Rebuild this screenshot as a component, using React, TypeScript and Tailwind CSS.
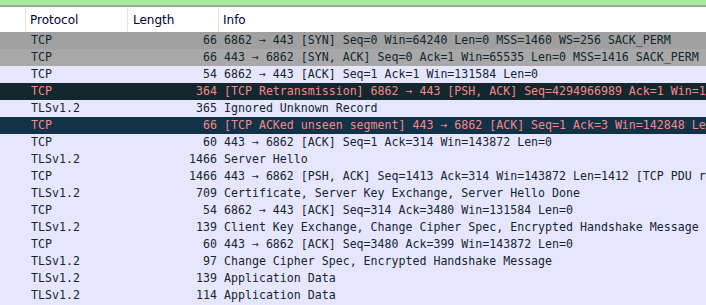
type Row = { proto: string; len: number; info: string; tone: 'syn' | 'syn2' | 'plain' | 'bad' | 'bad2' }

const rows: Row[] = [
  { proto: 'TCP', len: 66, info: '6862 → 443 [SYN] Seq=0 Win=64240 Len=0 MSS=1460 WS=256 SACK_PERM', tone: 'syn' },
  { proto: 'TCP', len: 66, info: '443 → 6862 [SYN, ACK] Seq=0 Ack=1 Win=65535 Len=0 MSS=1416 SACK_PERM', tone: 'syn2' },
  { proto: 'TCP', len: 54, info: '6862 → 443 [ACK] Seq=1 Ack=1 Win=131584 Len=0', tone: 'plain' },
  { proto: 'TCP', len: 364, info: '[TCP Retransmission] 6862 → 443 [PSH, ACK] Seq=4294966989 Ack=1 Win=131584 Len=310', tone: 'bad' },
  { proto: 'TLSv1.2', len: 365, info: 'Ignored Unknown Record', tone: 'plain' },
  { proto: 'TCP', len: 66, info: '[TCP ACKed unseen segment] 443 → 6862 [ACK] Seq=1 Ack=3 Win=142848 Len=0', tone: 'bad2' },
  { proto: 'TCP', len: 60, info: '443 → 6862 [ACK] Seq=1 Ack=314 Win=143872 Len=0', tone: 'plain' },
  { proto: 'TLSv1.2', len: 1466, info: 'Server Hello', tone: 'plain' },
  { proto: 'TCP', len: 1466, info: '443 → 6862 [PSH, ACK] Seq=1413 Ack=314 Win=143872 Len=1412 [TCP PDU reassembled in 14]', tone: 'plain' },
  { proto: 'TLSv1.2', len: 709, info: 'Certificate, Server Key Exchange, Server Hello Done', tone: 'plain' },
  { proto: 'TCP', len: 54, info: '6862 → 443 [ACK] Seq=314 Ack=3480 Win=131584 Len=0', tone: 'plain' },
  { proto: 'TLSv1.2', len: 139, info: 'Client Key Exchange, Change Cipher Spec, Encrypted Handshake Message', tone: 'plain' },
  { proto: 'TCP', len: 60, info: '443 → 6862 [ACK] Seq=3480 Ack=399 Win=143872 Len=0', tone: 'plain' },
  { proto: 'TLSv1.2', len: 97, info: 'Change Cipher Spec, Encrypted Handshake Message', tone: 'plain' },
  { proto: 'TLSv1.2', len: 139, info: 'Application Data', tone: 'plain' },
  { proto: 'TLSv1.2', len: 114, info: 'Application Data', tone: 'plain' },
]

const toneClass = {
  syn: 'bg-[#a0a0a0] text-[#12272e]',
  syn2: 'bg-[#a8a8a8] text-[#12272e]',
  plain: 'bg-[#e7e6ff] text-[#12272e]',
  bad: 'bg-[#12272e] text-[#f78787]',
  bad2: 'bg-[#113247] text-[#f78787]',
}

export default function App() {
  return (
    <div className="w-[706px] h-[305px] overflow-hidden bg-[#e7e6ff]">
      <div className="h-[5px] bg-[#a6eb9e]" />
      <div className="h-[2px] bg-[#a0a0a0]" />
      <div className="h-[25px] bg-white flex text-[12px] text-[#000040] font-['DejaVu_Sans',sans-serif] border-t border-white">
        <div className="w-[26px] border-r border-[#e5e5e5]" />
        <div className="w-[102px] pl-[4px] flex items-center border-r border-[#e5e5e5]">Protocol</div>
        <div className="w-[91px] pl-[5px] flex items-center border-r border-[#e5e5e5]">Length</div>
        <div className="flex-1 pl-[4px] flex items-center">Info</div>
      </div>
      <div className="font-['DejaVu_Sans_Mono',monospace] text-[11.6px]">
        {rows.map((r, i) => (
          <div key={i} className={`h-[17px] flex items-center whitespace-nowrap ${toneClass[r.tone]}`}>
            <div className="w-[26px] shrink-0" />
            <div className="w-[102px] shrink-0 pl-[5px]">{r.proto}</div>
            <div className="w-[89px] shrink-0 text-right">{r.len}</div>
            <div className="pl-[7px]">{r.info}</div>
          </div>
        ))}
      </div>
    </div>
  )
}
